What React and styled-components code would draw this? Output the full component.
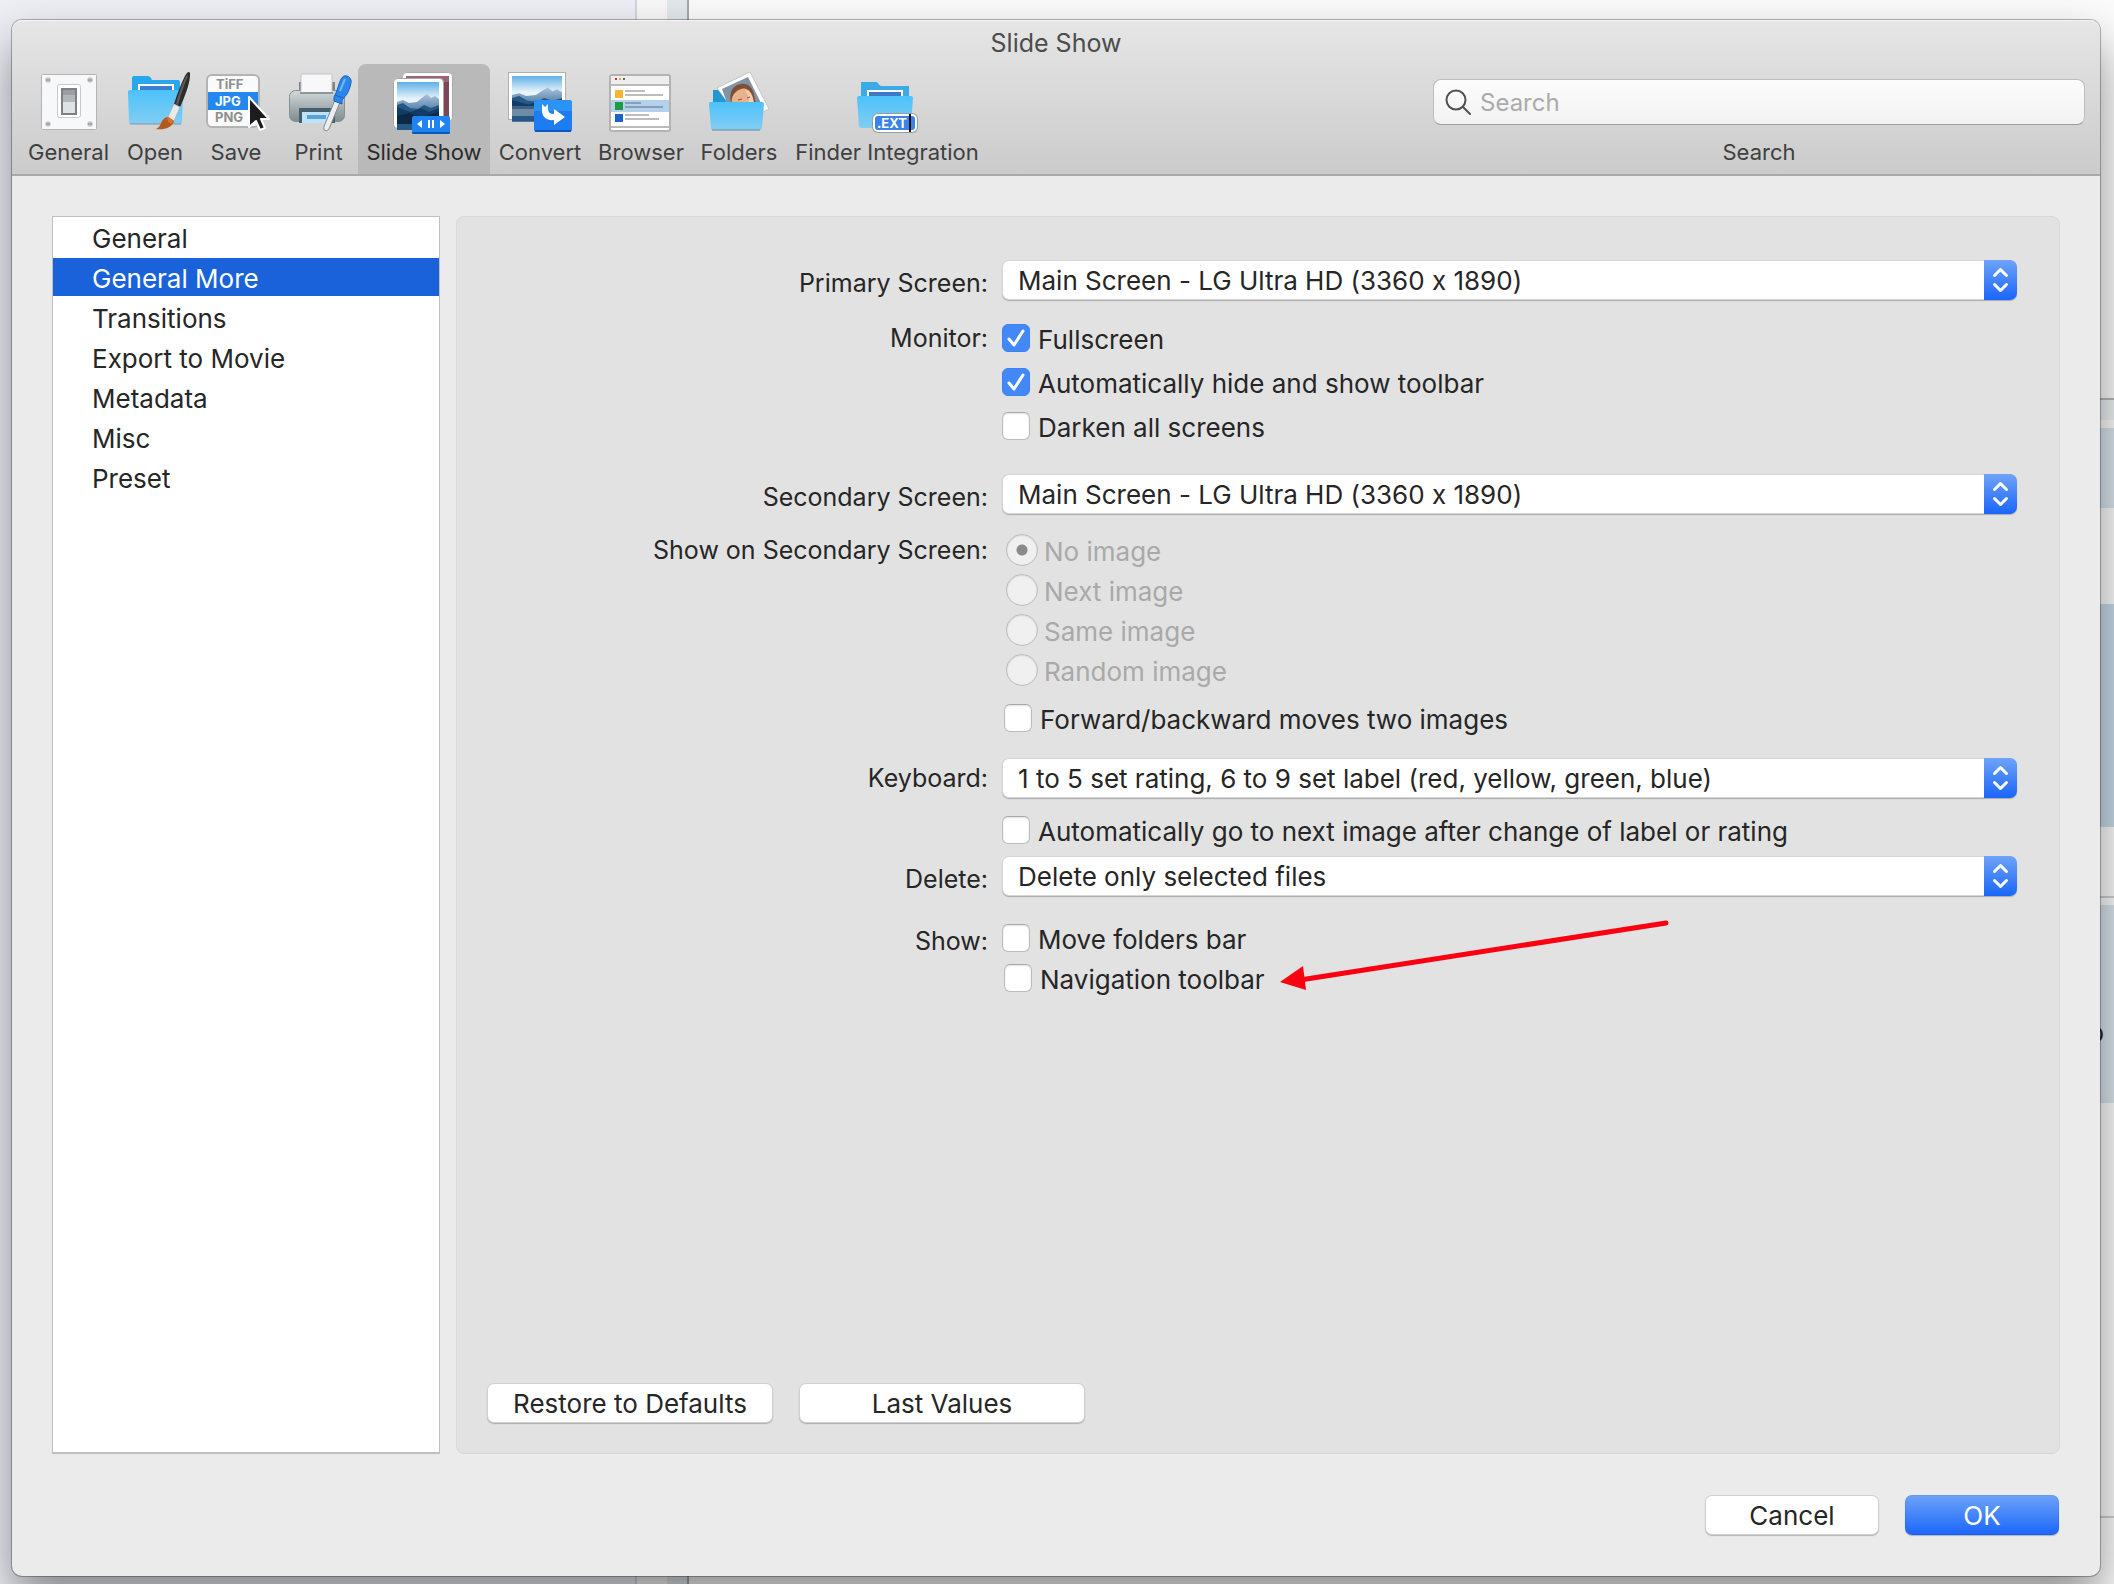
import React from 'react';
import styled, { createGlobalStyle, css } from 'styled-components';

const GlobalStyle = createGlobalStyle`
  *, *::before, *::after { box-sizing: border-box; }
  body {
    margin: 0;
    font-family: Inter, "Liberation Sans", sans-serif;
    font-size: 26px;
    font-feature-settings: "calt" 0;
    color: #262626;
    background: #f4f4f4;
  }
  button, input, select { font: inherit; font-feature-settings: inherit; color: inherit; }
`;

const Desktop = styled.div`
  display: grid;
  grid-template: minmax(100vh, auto) / 100%;
  overflow: hidden;
`;

/* The list window that lies behind the dialog. */
const Backdrop = styled.div`
  grid-area: 1 / 1;
  display: flex;
`;

const BackSidebar = styled.div`
  width: 637px;
  background: #eeeff5;
  border-right: 2px solid #d5d6d9;
`;

const BackGutter = styled.div`
  width: 30px;
  background: #f8f8f8;
`;

const BackScroller = styled.div`
  width: 22px;
  background: #e2e8eb;
  border-right: 2px solid #a4a8ab;
`;

const BackContent = styled.div`
  flex: 1;
  display: flex;
  flex-direction: column;
  background: #fbfbfb;
`;

const BackTop = styled.div`
  height: 398px;
  border-bottom: 2px solid #b4b5b7;
  box-sizing: content-box;
`;

const BackRule = styled.div`
  height: 2px;
  background: #cfcfcf;
`;

const BackRow = styled.div`
  height: ${(p) => p.$h}px;
  margin-bottom: ${(p) => p.$after}px;
  padding: 0 10px 60px 0;
  background: ${(p) => p.$color};
  display: flex;
  align-items: flex-end;
  justify-content: flex-end;
  line-height: 20px;
`;

const Window = styled.main`
  grid-area: 1 / 1;
  z-index: 1;
  margin: 20px 14px 8px 12px;
  display: flex;
  flex-direction: column;
  border-radius: 10px;
  background: #ebebeb;
  box-shadow: 0 0 0 1px rgba(0, 0, 0, 0.28), 0 24px 48px rgba(0, 0, 0, 0.44);
`;

const Header = styled.header`
  border-radius: 10px 10px 0 0;
  background: linear-gradient(#e6e6e6, #cbcbcb);
  border-bottom: 2px solid #a9a9a9;
  box-shadow: inset 0 1px #f5f5f5;
`;

const Title = styled.h1`
  margin: 0;
  padding-top: 6px;
  height: 44px;
  line-height: 34px;
  font-size: 25px;
  font-weight: 400;
  text-align: center;
  color: #4c4c4c;
`;

const Toolbar = styled.nav`
  display: flex;
  padding: 0 15px 0 8px;
`;

const Tool = styled.button`
  width: ${(p) => p.$w}px;
  height: 110px;
  padding: 6px 0 0;
  border: 0;
  border-radius: 8px 8px 0 0;
  background: ${(p) => (p.$active ? '#b9b9b9' : 'transparent')};
  display: flex;
  flex-direction: column;
  align-items: center;
  gap: 5px;
  font-size: 22px;
  line-height: 26px;
  white-space: nowrap;
  color: ${(p) => (p.$active ? '#2b2b2b' : '#404040')};

  svg { overflow: visible; display: block; }
`;

const SearchGroup = styled.div`
  width: 652px;
  margin-left: auto;
  padding-top: 15px;
  display: flex;
  flex-direction: column;
  align-items: center;
  gap: 14px;
  font-size: 22px;
  line-height: 26px;
  color: #404040;
`;

const SearchField = styled.div`
  width: 100%;
  height: 46px;
  padding: 0 10px;
  display: flex;
  align-items: center;
  gap: 8px;
  border: 1px solid #bdbdbd;
  border-bottom-color: #9d9d9d;
  border-radius: 8px;
  background: linear-gradient(#fcfcfc, #f2f2f2);
`;

const SearchInput = styled.input`
  flex: 1;
  padding: 2px 0 0;
  border: 0;
  outline: 0;
  background: none;
  font-size: 24px;
  &::placeholder { color: #ababab; opacity: 1; }
`;

const Body = styled.div`
  flex: 1;
  display: flex;
  gap: 16px;
  padding: 40px 40px 0;
`;

const Sidebar = styled.ul`
  width: 388px;
  margin: 0;
  padding: 1px 0;
  list-style: none;
  background: #fff;
  border: 1px solid #bfbfbf;
  border-bottom-width: 2px;
`;

const SidebarItem = styled.li`
  height: 40px;
  a {
    display: block;
    height: 38px;
    padding-left: 39px;
    line-height: 42px;
    text-decoration: none;
    color: ${(p) => (p.$selected ? '#fff' : '#262626')};
    background: ${(p) => (p.$selected ? '#1a62d9' : 'none')};
  }
`;

const Panel = styled.section`
  flex: 1;
  display: flex;
  flex-direction: column;
  padding: 43px 42px 30px 30px;
  border: 1px solid #d8d8d8;
  border-radius: 8px;
  background: #e2e2e2;
`;

const Row = styled.div`
  display: grid;
  grid-template-columns: 501px 1fr;
  column-gap: 14px;
  margin-top: ${(p) => p.$gap || 0}px;
`;

const RowLabel = styled.label`
  height: 40px;
  padding-top: ${(p) => (p.$lower ? 3 : 0)}px;
  font-size: 25px;
  line-height: 40px;
  text-align: right;
`;

const Options = styled.div`
  display: flex;
  flex-direction: column;
  gap: ${(p) => p.$gap || 0}px;
  padding-left: ${(p) => p.$indent || 0}px;
`;

const Option = styled.label`
  position: relative;
  width: fit-content;
  height: 40px;
  display: flex;
  align-items: center;
  gap: ${(p) => (p.$tight ? 6 : 8)}px;
  margin-top: ${(p) => p.$top || 0}px;
  padding-left: ${(p) => p.$indent || 0}px;
  color: ${(p) => (p.$muted ? '#a9a9a9' : 'inherit')};
  span { padding-top: 3px; }
`;

const mark = css`
  appearance: none;
  flex: none;
  margin: 0;
  border: 1px solid #bcbcbc;
  background: #fff no-repeat center;
`;

const CheckInput = styled.input.attrs({ type: 'checkbox' })`
  ${mark}
  width: 28px;
  height: 28px;
  border-radius: 6px;
  border-top-color: #a8a8a8;
  box-shadow: inset 0 1px 2px rgba(0, 0, 0, 0.12);
  &:checked {
    border-color: #3b82f5;
    background: #4288f7 url("data:image/svg+xml,%3Csvg xmlns='http://www.w3.org/2000/svg' width='26' height='26' fill='none' stroke='white' stroke-width='3' stroke-linecap='round' stroke-linejoin='round'%3E%3Cpath d='M6 14l5 6 9-14'/%3E%3C/svg%3E") center no-repeat;
    box-shadow: none;
  }
`;

const RadioInput = styled.input.attrs({ type: 'radio' })`
  ${mark}
  width: 32px;
  height: 32px;
  border-radius: 50%;
  background: #f0f0f0;
  box-shadow: inset 0 1px 2px rgba(0, 0, 0, 0.1);
  &:checked {
    background: radial-gradient(circle, #8a8a8a 5px, #f0f0f0 6px);
  }
`;

const SelectBox = styled.div`
  display: grid;
  height: 40px;
  border-radius: 7px;
  background: #fff;
  box-shadow: inset 0 0 0 1px rgba(0, 0, 0, 0.16), 0 1px 1px rgba(0, 0, 0, 0.24);
`;

const Select = styled.select`
  grid-area: 1 / 1;
  appearance: none;
  width: 100%;
  height: 40px;
  padding: 1px 50px 0 16px;
  border: 0;
  border-radius: 7px;
  outline: 0;
  background: none;
`;

const Stepper = styled.svg`
  grid-area: 1 / 1;
  justify-self: end;
  pointer-events: none;
  width: 33px;
  height: 40px;
  border-radius: 0 7px 7px 0;
  background: linear-gradient(#6ea3f8, #1a66fb);
`;

const Push = styled.button`
  min-width: ${(p) => p.$w}px;
  height: 40px;
  padding: 1px 16px 0;
  border: 0;
  border-radius: 7px;
  line-height: 40px;
  color: ${(p) => (p.$primary ? '#fff' : '#262626')};
  background: ${(p) => (p.$primary ? 'linear-gradient(#6ea3f8, #1a66fb)' : '#fff')};
  box-shadow: inset 0 0 0 1px rgba(0, 0, 0, ${(p) => (p.$primary ? 0.05 : 0.18)}), 0 1px 1px rgba(0, 0, 0, 0.24);
`;

const PanelFooter = styled.div`
  display: flex;
  gap: 26px;
  margin-top: auto;
`;

const Footer = styled.footer`
  display: flex;
  justify-content: flex-end;
  gap: 26px;
  padding: 41px;
`;

const Arrow = styled.svg`
  position: absolute;
  left: calc(100% + 15px);
  top: -38px;
  pointer-events: none;
`;

/* ---------- icons ---------- */

const Svg = ({ children }) => (
  <svg width="64" height="64" viewBox="0 0 64 64" aria-hidden="true">{children}</svg>
);

const GeneralIcon = () => (
  <Svg>
    <rect x="4.5" y="4.5" width="55" height="55" rx="1" fill="#f7f8fa" stroke="#b4b4b6" />
    {[[11, 10], [53, 10], [11, 54], [53, 54]].map(([x, y]) => (
      <g key={`${x}-${y}`}>
        <circle cx={x} cy={y} r="2.8" fill="#c4c7ca" />
        <path d={`M${x - 2} ${y}h4`} stroke="#8a8a8a" />
      </g>
    ))}
    <rect x="20.500" y="14.500" width="23" height="33" rx="2" fill="#fff" stroke="#c9c9c9" />
    <rect x="25" y="19" width="14" height="25" fill="#dfe2e5" stroke="#7c8084" strokeWidth="2" />
    <path d="M26 20h12v12H26z" fill="#b4b7ba" />
    <path d="M26 20h12v5H26z" fill="#9c9fa2" />
  </Svg>
);

const OpenIcon = () => (
  <Svg>
    <defs>
      <linearGradient id="folder" x1="0" y1="0" x2="0" y2="1">
        <stop offset="0" stopColor="#4cc2fa" />
        <stop offset="1" stopColor="#82cdf3" />
      </linearGradient>
    </defs>
    <path d="M9 8q0-2 2-2h14q2 0 3 2l1 2h26q2 0 2 2v12H9z" fill="#28a8ec" />
    <path d="M16 15h34v8H16z" fill="#3b7fd4" stroke="#fff" strokeWidth="2" />
    <path d="M5 22q0-2 2-2h51q2 0 2 2l-1 31q0 1-2 1H8q-2 0-2-1z" fill="url(#folder)" />
    <path d="M7 54h51" stroke="#7f98a6" />
    <path d="M67 3c1 8-6 26-10 34l-6-3C54 24 61 6 64 3q2-2 3 0z" fill="#2d2d2d" />
    <path d="M64 5c-4 6-8 17-11 29l2 1C58 24 62 13 65 6z" fill="#5a5a5a" />
    <path d="M51 34l6 3-6 14-6-4z" fill="#e9e9e9" stroke="#aaa" strokeWidth=".6" />
    <path d="M45 47l6 4c-2 7-10 9-18 8 4-2 4-4 6-8 1-2 4-4 6-4z" fill="#b4581c" />
    <path d="M45 47l6 4-3 3c-2-1-4-3-4-6z" fill="#d2762f" />
  </Svg>
);

const iconText = { fontFamily: 'Inter, "Liberation Sans", sans-serif', fontWeight: 700 };

const SaveIcon = () => (
  <Svg>
    <rect x="3" y="5" width="52" height="52" rx="5" fill="#fafafa" stroke="#b3b3b3" strokeWidth="2" />
    <path d="M4 22h50v18H4z" fill="#2387ee" />
    <g style={iconText} fontSize="13" fill="#8f8f8f">
      <text x="12" y="19">TiFF</text>
      <text x="11" y="36" fill="#fff">JPG</text>
      <text x="11" y="52">PNG</text>
    </g>
    <path d="M45 27v30l7-6 4 9 5-2-4-9h8z" fill="#1c1c1e" stroke="#fff" strokeWidth="2" strokeLinejoin="round" />
  </Svg>
);

const PrintIcon = () => (
  <Svg>
    <defs>
      <linearGradient id="printer" x1="0" y1="0" x2="0" y2="1">
        <stop offset="0" stopColor="#d3d9da" />
        <stop offset="1" stopColor="#7e8b8d" />
      </linearGradient>
    </defs>
    <path d="M12 12h36v12H12z" fill="#7b8589" />
    <rect x="2.500" y="20.500" width="55" height="31" rx="6" fill="url(#printer)" stroke="#879092" />
    <path d="M14 4h31v19H14z" fill="#f8f8fa" stroke="#c3c3c6" />
    <path d="M13 23h33" stroke="#8d9698" strokeWidth="2" />
    <path d="M12 38h36v15H12z" fill="#44606e" />
    <path d="M15 42h30v11H15z" fill="#bde3fa" />
    <path d="M20 45h19v4H20z" fill="#5ba0d8" />
    <path d="M48 30l5 2-11 27q-2 3-5 1-1-2 1-6z" fill="#eceef0" stroke="#85898c" />
    <path d="M57 6q5-1 7 4 1 4-4 14l-5 6v4l-8-3v-4l2-4c3-8 4-15 8-17z" fill="#2c86ea" stroke="#1763c4" />
    <path d="M48 25l8 3" stroke="#1763c4" />
    <path d="M58 9l-5 12" stroke="#71b4fb" strokeWidth="2" />
  </Svg>
);

const Scene = ({ x, y, w, h }) => (
  <svg x={x} y={y} width={w} height={h} viewBox="0 0 42 42" preserveAspectRatio="none">
    <defs>
      <linearGradient id="sky" x1="0" y1="0" x2="0" y2="1">
        <stop offset="0" stopColor="#5fb0e8" />
        <stop offset=".4" stopColor="#e9f4fb" />
      </linearGradient>
      <linearGradient id="ridge" x1="0" y1="0" x2="0" y2="1">
        <stop offset="0" stopColor="#a9c3dc" />
        <stop offset=".6" stopColor="#4a78a2" />
      </linearGradient>
    </defs>
    <path d="M0 0h42v42H0z" fill="url(#sky)" />
    <path d="M0 20l6-2 6 3 8-1 6-5 4-3 4 4 4-2 4 3v26H0z" fill="url(#ridge)" />
    <path d="M0 23l6-2 7 5 8 1 6-4 7 3 8-3v25H0z" fill="#255887" />
    <path d="M0 25l8 3 6 2 10-4 8 4 10-4v16H0z" fill="#123c66" />
    <path d="M0 34l12-3 12 4 18-5v12H0z" fill="#0b2947" />
  </svg>
);

const SlideShowIcon = () => (
  <Svg>
    <rect x="10.500" y="2.500" width="50" height="49" rx="4" fill="#fff" stroke="#aaa" />
    <path d="M14 6h43v42H14z" fill="#9b6577" />
    <path d="M52 12h5v36h-5z" fill="#7c4659" />
    <rect x="1.500" y="8.500" width="50" height="50" rx="4" fill="#fff" stroke="#a8a8a8" />
    <Scene x={5} y={12} w={42} h={42} />
    <rect x="20" y="46" width="38" height="18" rx="2" fill="#2083f3" />
    <path d="M20 62h38v1q0 1-2 1H22q-2 0-2-1z" fill="#0b59bd" />
    <path d="M30 50v8l-5-4zM48 50v8l5-4zM36 50h2v8h-2zM40 50h2v8h-2z" fill="#fff" />
  </Svg>
);

const ConvertIcon = () => (
  <Svg>
    <rect x=".5" y="2.500" width="57" height="47" fill="#fff" stroke="#b0b0b0" />
    <Scene x={4} y={6} w={50} h={40} />
    <path d="M4 36h50v10H4z" fill="#6d8ba4" />
    <path d="M4 36h50v3H4z" fill="#3c6284" />
    <rect x="26" y="30" width="38" height="32" rx="3" fill="#1d7cf0" />
    <path d="M26 33q0-3 3-3h32q3 0 3 3v8H26z" fill="#2b93f5" />
    <path d="M27 61h36" stroke="#0b59bd" strokeWidth="2" />
    <path d="M34 34l3 3 3-3v5q0 5 6 5v-5l11 8-11 8v-5c-8 1-12-4-12-9z" fill="#fff" />
  </Svg>
);

const BrowserIcon = () => (
  <Svg>
    <rect x="1" y="5" width="60" height="56" rx="2" fill="#fff" stroke="#b3b3b3" strokeWidth="2" />
    <path d="M2 6h58v8H2z" fill="#eee" />
    <path d="M2 15h58M2 57h58" stroke="#bbb" strokeWidth="2" />
    <path d="M2 30h58v12H2z" fill="#b4d1ec" />
    <path d="M6 8h2v2H6z" fill="#c33" />
    <path d="M10 8h2v2h-2z" fill="#e9a93a" />
    <path d="M14 8h2v2h-2z" fill="#2a8a3a" />
    <path d="M6 20h8v8H6z" fill="#fbb334" />
    <path d="M6 32h8v8H6z" fill="#1f9b45" />
    <path d="M6 44h8v8H6z" fill="#1b62cb" />
    <path d="M16 21h20M16 25h38M16 45h24M16 49h34" stroke="#bcbcbc" strokeWidth="2" />
    <path d="M16 33h16M16 37h38" stroke="#86a0b8" strokeWidth="2" />
  </Svg>
);

const FoldersIcon = () => (
  <Svg>
    <path d="M6 20h20v14H6z" fill="#2298d2" />
    <path d="M10 18L43 2l19 37-27 13z" fill="#fff" stroke="#bbb" strokeWidth=".8" />
    <path d="M15 19L41 7l14 28-20 9H24z" fill="#8193a6" />
    <path d="M24 32c-2-9 1-17 10-18 7-1 12 4 13 11l2 9z" fill="#7d5034" />
    <path d="M25 34c-1-6 1-10 5-13 3-2 6-3 9-2 4 1 7 5 8 15H28z" fill="#e9b28c" />
    <path d="M38 20c5 1 8 6 9 14h-6c2-5 0-10-3-14z" fill="#f4cfb2" />
    <path d="M31 30l4-1M40 28l3-1" stroke="#8a5a42" strokeWidth="1.200" />
    <path d="M2 34q0-2 2-2h51q2 0 2 2l-2 24q0 2-2 2H6q-2 0-2-2z" fill="url(#folder)" />
    <path d="M5 60h48" stroke="#688494" />
  </Svg>
);

const FinderIcon = () => (
  <Svg>
    <path d="M6 12h16q3 4 4 4h28v14H6z" fill="#3baae6" />
    <path d="M13 21h34v9H13z" fill="#3f78c6" stroke="#fff" strokeWidth="2" />
    <path d="M2 28q0-2 2-2h52q2 0 2 2l-2 28q0 2-2 2H6q-2 0-2-2z" fill="url(#folder)" />
    <rect x="17" y="43" width="46" height="20" rx="6" fill="#9a9a9a" />
    <rect x="19" y="45" width="42" height="16" rx="4" fill="#3a82e8" stroke="#fff" strokeWidth="2" />
    <text style={iconText} x="22" y="58" fontSize="13" fill="#fff">.EXT</text>
    <path d="M55 44v18" stroke="#111" strokeWidth="2" />
  </Svg>
);

const tools = [
  ['General', 97, GeneralIcon],
  ['Open', 76, OpenIcon],
  ['Save', 86, SaveIcon],
  ['Print', 79, PrintIcon],
  ['Slide Show', 132, SlideShowIcon],
  ['Convert', 100, ConvertIcon],
  ['Browser', 102, BrowserIcon],
  ['Folders', 94, FoldersIcon],
  ['Finder Integration', 202, FinderIcon],
];

const sections = ['General', 'General More', 'Transitions', 'Export to Movie', 'Metadata', 'Misc', 'Preset'];

const Popup = ({ id, value }) => (
  <SelectBox>
    <Select id={id} defaultValue={value}>
      <option>{value}</option>
    </Select>
    <Stepper viewBox="0 0 33 40" fill="none" stroke="#fff" strokeWidth="3" strokeLinecap="round" strokeLinejoin="round" aria-hidden="true">
      <path d="M10.500 15.500l6-6 6 6M10.500 24.500l6 6 6-6" />
    </Stepper>
  </SelectBox>
);

const Check = ({ children, checked, extra, ...rest }) => (
  <Option {...rest}>
    <CheckInput defaultChecked={checked} />
    <span>{children}</span>
    {extra}
  </Option>
);

const screen = 'Main Screen - LG Ultra HD (3360 x 1890)';

const PointerArrow = () => (
  <Arrow width="390" height="72" viewBox="0 0 390 72" aria-hidden="true">
    <path d="M386 3L20 60" stroke="#fb0011" strokeWidth="5" strokeLinecap="round" />
    <path d="M0 62l23-16 3 24z" fill="#fb0011" />
  </Arrow>
);

export default function App() {
  return (
    <>
      <GlobalStyle />
      <Desktop>
        <Backdrop>
          <BackSidebar />
          <BackGutter />
          <BackScroller />
          <BackContent>
            <BackTop />
            <BackRule as="div" hidden />
            <BackRow $h={20} $after={8} $color="#ecf1f3" style={{ padding: 0 }} />
            <BackRow $h={80} $after={96} $color="#d9e3ec" />
            <BackRow $h={223} $after={69} $color="#c6d9e7" />
            <BackRule />
            <BackRow $h={205} $after={413} $color="linear-gradient(#fbfbfb 7px, #d9e3ec 7px)">o</BackRow>
            <BackRule />
          </BackContent>
        </Backdrop>
        <Window>
          <Header>
            <Title>Slide Show</Title>
            <Toolbar>
              {tools.map(([name, w, Icon]) => (
                <Tool key={name} type="button" $w={w} $active={name === 'Slide Show'}>
                  <Icon />
                  {name}
                </Tool>
              ))}
              <SearchGroup>
                <SearchField>
                  <svg width="28" height="28" viewBox="0 0 28 28" fill="none" stroke="#505050" strokeWidth="2" strokeLinecap="round" aria-hidden="true">
                    <circle cx="12" cy="12" r="9.500" />
                    <path d="M19 19l7 7" />
                  </svg>
                  <SearchInput id="search" type="text" placeholder="Search" />
                </SearchField>
                <label htmlFor="search">Search</label>
              </SearchGroup>
            </Toolbar>
          </Header>
          <Body>
            <Sidebar>
              {sections.map((name) => (
                <SidebarItem key={name} $selected={name === 'General More'}>
                  <a href="#section">{name}</a>
                </SidebarItem>
              ))}
            </Sidebar>
            <Panel>
              <Row>
                <RowLabel $lower htmlFor="primary">Primary Screen:</RowLabel>
                <Popup id="primary" value={screen} />
              </Row>
              <Row $gap={18}>
                <RowLabel as="div">Monitor:</RowLabel>
                <Options $gap={4}>
                  <Check checked>Fullscreen</Check>
                  <Check checked>Automatically hide and show toolbar</Check>
                  <Check>Darken all screens</Check>
                </Options>
              </Row>
              <Row $gap={28}>
                <RowLabel $lower htmlFor="secondary">Secondary Screen:</RowLabel>
                <Popup id="secondary" value={screen} />
              </Row>
              <Row $gap={16}>
                <RowLabel as="div">Show on Secondary Screen:</RowLabel>
                <Options $indent={2}>
                  {['No image', 'Next image', 'Same image', 'Random image'].map((name, i) => (
                    <Option key={name} $muted $tight $indent={2}>
                      <RadioInput name="second" disabled defaultChecked={i === 0} />
                      <span>{name}</span>
                    </Option>
                  ))}
                  <Check $top={8}>Forward/backward moves two images</Check>
                </Options>
              </Row>
              <Row $gap={20}>
                <RowLabel htmlFor="keyboard">Keyboard:</RowLabel>
                <Popup id="keyboard" value="1 to 5 set rating, 6 to 9 set label (red, yellow, green, blue)" />
              </Row>
              <Row $gap={12}>
                <span />
                <Check>Automatically go to next image after change of label or rating</Check>
              </Row>
              <Row $gap={6}>
                <RowLabel $lower htmlFor="delete">Delete:</RowLabel>
                <Popup id="delete" value="Delete only selected files" />
              </Row>
              <Row $gap={22}>
                <RowLabel as="div" $lower>Show:</RowLabel>
                <Options>
                  <Check>Move folders bar</Check>
                  <Check $indent={2} extra={<PointerArrow />}>Navigation toolbar</Check>
                </Options>
              </Row>
              <PanelFooter>
                <Push type="button" $w={286}>Restore to Defaults</Push>
                <Push type="button" $w={286}>Last Values</Push>
              </PanelFooter>
            </Panel>
          </Body>
          <Footer>
            <Push type="button" $w={174}>Cancel</Push>
            <Push type="button" $w={154} $primary>OK</Push>
          </Footer>
        </Window>
      </Desktop>
    </>
  );
}
